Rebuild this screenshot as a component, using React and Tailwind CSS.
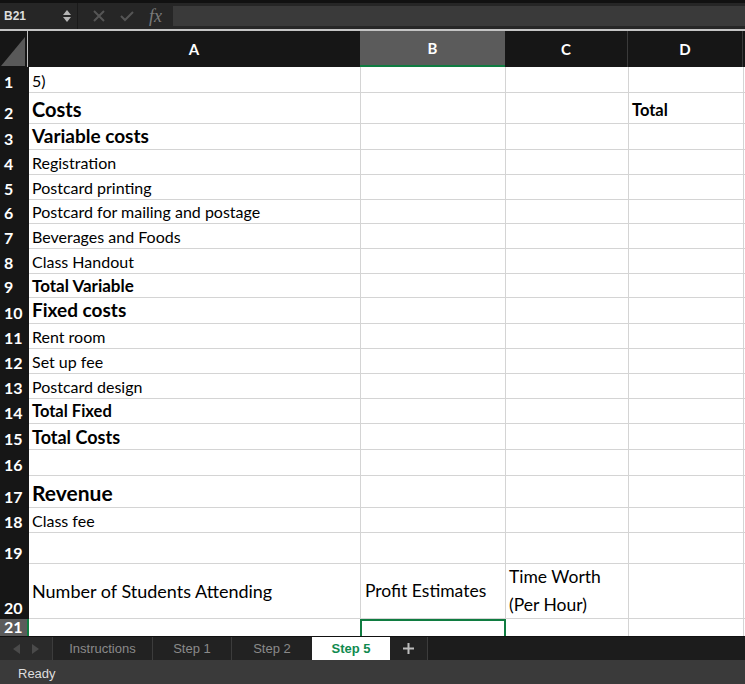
import React from "react";

const rows = [
  { n: 1, h: 26, a: "5)", cls: "text-[16px]" },
  { n: 2, h: 31, a: "Costs", cls: "text-[20px] font-bold", d: "Total" },
  { n: 3, h: 26, a: "Variable costs", cls: "text-[19px] font-bold" },
  { n: 4, h: 25, a: "Registration", cls: "text-[16px]" },
  { n: 5, h: 25, a: "Postcard printing", cls: "text-[16px]" },
  { n: 6, h: 24, a: "Postcard for mailing and postage", cls: "text-[16px]" },
  { n: 7, h: 25, a: "Beverages and Foods", cls: "text-[16px]" },
  { n: 8, h: 25, a: "Class Handout", cls: "text-[16px]" },
  { n: 9, h: 24, a: "Total Variable", cls: "text-[17px] font-bold" },
  { n: 10, h: 26, a: "Fixed costs", cls: "text-[19px] font-bold" },
  { n: 11, h: 25, a: "Rent room", cls: "text-[16px]" },
  { n: 12, h: 25, a: "Set up fee", cls: "text-[16px]" },
  { n: 13, h: 25, a: "Postcard design", cls: "text-[16px]" },
  { n: 14, h: 25, a: "Total Fixed", cls: "text-[16.5px] font-bold" },
  { n: 15, h: 26, a: "Total Costs", cls: "text-[18px] font-bold" },
  { n: 16, h: 26, a: "", cls: "" },
  { n: 17, h: 32, a: "Revenue", cls: "text-[21px] font-bold" },
  { n: 18, h: 25, a: "Class fee", cls: "text-[16px]" },
  { n: 19, h: 31, a: "", cls: "" },
];

const font = { fontFamily: "Lato, 'Open Sans', sans-serif" };

function RowHead({ n, sel }) {
  return (
    <div
      className={
        "w-[29px] shrink-0 flex items-end pl-[4px] pb-[1px] text-[16px] font-bold text-white leading-none " +
        (sel ? "bg-[#5b5b5b] border-r-2 border-[#107c41]" : "bg-[#161616]")
      }
    >
      <span className="pb-[2px]">{n}</span>
    </div>
  );
}

export default function App() {
  return (
    <div className="w-[745px] h-[684px] overflow-hidden flex flex-col bg-[#1e1e1e]" style={font}>
      {/* formula bar */}
      <div className="h-[29px] shrink-0 flex items-center bg-[#262626] border-t-[3px] border-[#111111]">
        <div className="w-[78px] h-full flex items-center justify-between pl-[4px] pr-[6px] border-r border-[#1a1a1a]">
          <span className="text-[12px] font-bold text-[#dddddd]" style={{ fontFamily: "'Liberation Sans', sans-serif" }}>B21</span>
          <div className="flex flex-col items-center gap-[2px]">
            <svg width="8" height="5" viewBox="0 0 8 5"><path d="M4 0L8 5H0z" fill="#b5b5b5" /></svg>
            <svg width="8" height="5" viewBox="0 0 8 5"><path d="M0 0H8L4 5z" fill="#b5b5b5" /></svg>
          </div>
        </div>
        <div className="w-[95px] h-full flex items-center pl-[15px] gap-[15px]">
          <svg width="12" height="12" viewBox="0 0 12 12"><path d="M1 1L11 11M11 1L1 11" stroke="#555555" strokeWidth="2" /></svg>
          <svg width="14" height="12" viewBox="0 0 14 12"><path d="M1 6L5 10L13 2" stroke="#555555" strokeWidth="2" fill="none" /></svg>
          <span className="text-[18px] italic text-[#7a7a7a] leading-none" style={{ fontFamily: "'Liberation Serif', serif" }}>fx</span>
        </div>
        <div className="flex-1 h-[20px] bg-[#3a3a3a]" />
      </div>
      <div className="h-[2px] shrink-0 bg-[#c4c4c4]" />
      {/* header */}
      <div className="h-[36px] shrink-0 flex bg-[#161616] text-white font-bold text-[15px]">
        <div className="w-[28px] shrink-0 relative border-r border-[#bfbfbf] bg-[#161616]">
          <svg className="absolute bottom-[1px] right-[2px]" width="24" height="29" viewBox="0 0 24 29"><path d="M24 0V29H0z" fill="#595959" /></svg>
        </div>
        <div className="w-[332px] shrink-0 flex items-center justify-center">A</div>
        <div className="w-[145px] shrink-0 flex items-center justify-center bg-[#5b5b5b] border-b-2 border-[#107c41]">B</div>
        <div className="w-[123px] shrink-0 flex items-center justify-center border-r border-[#3a3a3a]">C</div>
        <div className="w-[115px] shrink-0 flex items-center justify-center border-r border-[#3a3a3a]">D</div>
        <div className="flex-1" />
      </div>
      {/* body */}
      <div className="flex-1 overflow-hidden flex flex-col bg-white text-black">
        {rows.map((r) => (
          <div key={r.n} className="flex shrink-0" style={{ height: r.h }}>
            <RowHead n={r.n} />
            <div className={"w-[332px] shrink-0 border-b border-r border-[#d4d4d4] flex items-end pl-[3px] pb-[1px] leading-tight whitespace-nowrap " + r.cls}>
              {r.a}
            </div>
            <div className="w-[145px] shrink-0 border-b border-r border-[#d4d4d4]" />
            <div className="w-[123px] shrink-0 border-b border-r border-[#d4d4d4]" />
            <div className="w-[115px] shrink-0 border-b border-r border-[#d4d4d4] flex items-end pl-[3px] pb-[2px] text-[16.5px] font-bold leading-tight">
              {r.d || ""}
            </div>
            <div className="flex-1 border-b border-[#d4d4d4]" />
          </div>
        ))}
        <div className="flex shrink-0 h-[55px]">
          <RowHead n={20} />
          <div className="w-[332px] shrink-0 border-b border-r border-[#d4d4d4] flex items-center pl-[3px] text-[18px] whitespace-nowrap">
            Number of Students Attending
          </div>
          <div className="w-[145px] shrink-0 border-b border-r border-[#d4d4d4] flex items-center pl-[4px] text-[17.5px] whitespace-nowrap">
            Profit Estimates
          </div>
          <div className="w-[123px] shrink-0 border-b border-r border-[#d4d4d4] flex items-center pl-[3px] text-[17.5px] leading-[28px]">
            Time Worth (Per Hour)
          </div>
          <div className="w-[115px] shrink-0 border-b border-r border-[#d4d4d4]" />
          <div className="flex-1 border-b border-[#d4d4d4]" />
        </div>
        <div className="flex flex-1">
          <RowHead n={21} sel />
          <div className="w-[331px] shrink-0" />
          <div className="w-[146px] shrink-0 border-2 border-b-0 border-[#107c41]" />
          <div className="w-[123px] shrink-0 border-r border-[#d4d4d4]" />
          <div className="w-[115px] shrink-0 border-r border-[#d4d4d4]" />
          <div className="flex-1" />
        </div>
      </div>
      {/* tabs */}
      <div className="h-[24px] shrink-0 flex bg-[#1c1c1c] border-t border-[#111111] text-[13px]" style={{ fontFamily: "'Liberation Sans', Arial, sans-serif" }}>
        <div className="w-[53px] shrink-0 flex items-center justify-center gap-[12px] bg-[#2a2a2a] border-r border-[#3c3c3c]">
          <svg width="7" height="10" viewBox="0 0 7 10"><path d="M7 0V10L0 5z" fill="#4a4a4a" /></svg>
          <svg width="7" height="10" viewBox="0 0 7 10"><path d="M0 0V10L7 5z" fill="#4a4a4a" /></svg>
        </div>
        <div className="w-[100px] shrink-0 flex items-center justify-center text-[#8a8a8a] bg-[#222222] border-r border-[#3c3c3c]">Instructions</div>
        <div className="w-[79px] shrink-0 flex items-center justify-center text-[#8a8a8a] bg-[#222222] border-r border-[#3c3c3c]">Step 1</div>
        <div className="w-[80px] shrink-0 flex items-center justify-center text-[#8a8a8a] bg-[#222222]">Step 2</div>
        <div className="w-[78px] shrink-0 flex items-center justify-center text-[#0f8a4f] font-bold bg-white">Step 5</div>
        <div className="w-[38px] shrink-0 flex items-center justify-center bg-[#222222] border-r border-[#3c3c3c]">
          <svg width="11" height="11" viewBox="0 0 11 11"><path d="M5.5 0V11M0 5.5H11" stroke="#bdbdbd" strokeWidth="2" /></svg>
        </div>
        <div className="flex-1" />
      </div>
      {/* status */}
      <div className="h-[24px] shrink-0 flex items-center pl-[18px] pt-[4px] bg-[#3a3a3a] text-[13px] text-[#dedede]" style={{ fontFamily: "'Liberation Sans', Arial, sans-serif" }}>
        Ready
      </div>
    </div>
  );
}
